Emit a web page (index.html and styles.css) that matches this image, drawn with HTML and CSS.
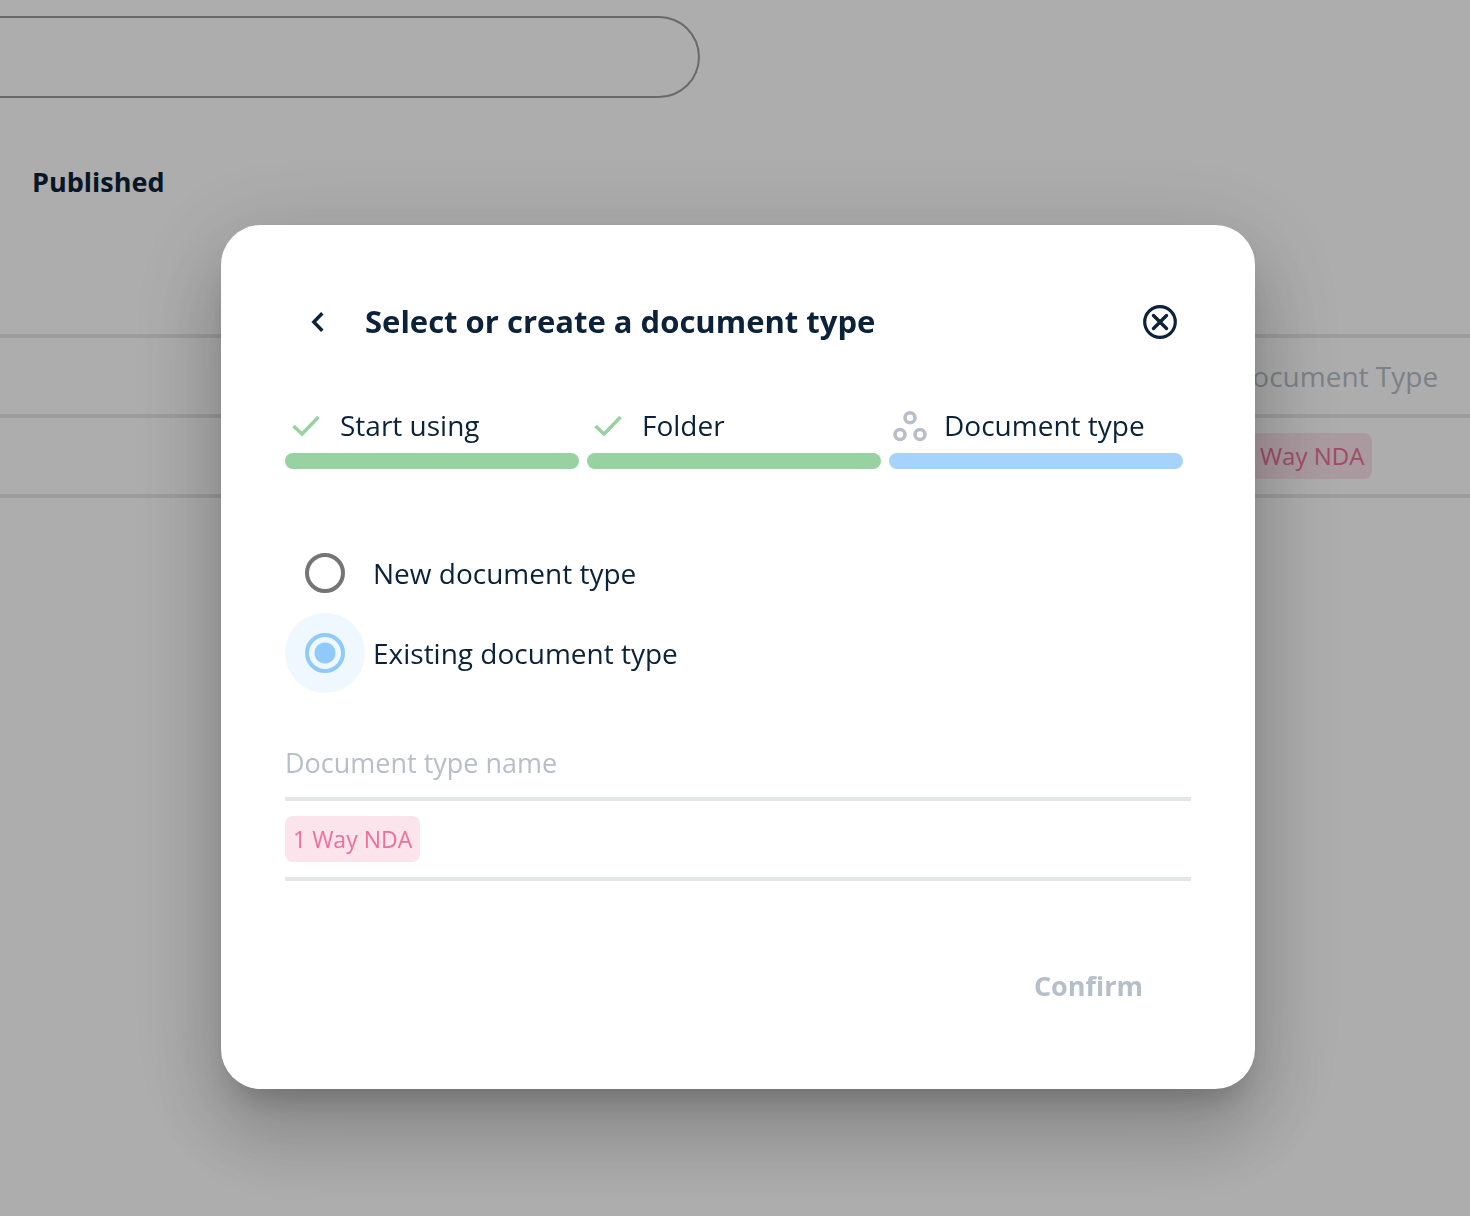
FILE: index.html
```html
<!DOCTYPE html>
<html lang="en">
<head>
  <meta charset="UTF-8" />
  <meta name="viewport" content="width=device-width, initial-scale=1" />
  <title>Select or create a document type</title>
  <link rel="stylesheet" href="styles.css">
</head>
<body>

  <main class="page">
    <input type="search" class="search" aria-label="Search documents" />
    <h2 class="page-heading">Published</h2>

    <table class="documents">
      <thead>
        <tr>
          <th></th>
          <th class="type-column">Document Type</th>
        </tr>
      </thead>
      <tbody>
        <tr>
          <td></td>
          <td class="type-column"><span class="tag">1 Way NDA</span></td>
        </tr>
      </tbody>
    </table>
  </main>

  <!-- Document type dialog -->
  <div class="overlay">
    <form class="modal" role="dialog" aria-modal="true" aria-labelledby="modalTitle">
      <header class="modal-header">
        <button type="button" class="icon-button" aria-label="Back">
          <svg width="18" height="24" viewBox="0 0 18 24" fill="none" stroke="currentColor" stroke-width="3.4">
            <path d="M14.3 4.2 L5.8 13 L14.3 21.8" />
          </svg>
        </button>
        <h1 id="modalTitle">Select or create a document type</h1>
        <button type="button" class="icon-button" aria-label="Close">
          <svg width="38" height="38" viewBox="0 0 38 38" fill="none" stroke="currentColor">
            <circle cx="20" cy="20" r="15.3" stroke-width="3.2" />
            <path d="M13.5 13.5 L26.5 26.5 M26.5 13.5 L13.5 26.5" stroke-width="3.4" stroke-linecap="round" />
          </svg>
        </button>
      </header>

      <ol class="steps">
        <li class="step done">
          <div class="step-label">
            <svg width="40" height="40" viewBox="0 0 40 40" fill="none" stroke="currentColor" stroke-width="3.4">
              <path d="M8.5 21 L17 29 L33.5 12" />
            </svg>
            Start using
          </div>
        </li>
        <li class="step done">
          <div class="step-label">
            <svg width="40" height="40" viewBox="0 0 40 40" fill="none" stroke="currentColor" stroke-width="3.4">
              <path d="M8.5 21 L17 29 L33.5 12" />
            </svg>
            Folder
          </div>
        </li>
        <li class="step current">
          <div class="step-label">
            <svg width="40" height="40" viewBox="0 0 40 40" fill="none" stroke="currentColor" stroke-width="3.6">
              <circle cx="21" cy="12.7" r="5" />
              <circle cx="11" cy="29.5" r="5" />
              <circle cx="31" cy="29.5" r="5" />
            </svg>
            Document type
          </div>
        </li>
      </ol>

      <div class="options">
        <label class="option">
          <span class="radio-wrap"><input type="radio" name="mode" value="new" /></span>
          New document type
        </label>
        <label class="option">
          <span class="radio-wrap"><input type="radio" name="mode" value="existing" checked /></span>
          Existing document type
        </label>
      </div>

      <input type="text" class="name-input" name="typeName" placeholder="Document type name" aria-label="Document type name" />
      <ul class="type-list">
        <li><span class="tag">1 Way NDA</span></li>
      </ul>

      <footer class="modal-footer">
        <button type="submit" class="confirm" disabled>Confirm</button>
      </footer>
    </form>
  </div>

</body>
</html>
```

FILE: styles.css
```css
* {
  box-sizing: border-box;
}
body {
  margin: 0;
  min-height: 100vh;
  font-family: "Open Sans", sans-serif;
  font-size: 28px;
  line-height: 40px;
  color: #0b2239;
  background: #fff;
}
ol, ul {
  list-style: none;
  margin: 0;
  padding: 0;
}
button {
  font-family: inherit;
  border: none;
  background: none;
  color: inherit;
  cursor: pointer;
}

/* Page behind the dialog */
.page {
  padding-top: 16px;
}
.search {
  display: block;
  width: 48%;
  max-width: 700px;
  height: 82px;
  padding: 0 40px;
  font: inherit;
  border: 2px solid #9c9c9c;
  border-left: none;
  border-radius: 0 41px 41px 0;
  background: #fff;
}
.page-heading {
  margin: 64px 32px 132px;
  font-size: 27px;
  font-weight: 700;
}
.documents {
  width: 100%;
  border-collapse: separate;
  border-spacing: 0;
  border-top: 4px solid #e4e6e9;
}
.documents th,
.documents td {
  height: 80px;
  padding: 0;
  border-bottom: 4px solid #e4e6e9;
  font-weight: 400;
  text-align: left;
}
.documents th {
  color: #b6bfc8;
}
.documents .type-column {
  width: 238px;
}
.tag {
  display: inline-block;
  padding: 0 8px;
  font-size: 24px;
  line-height: 46px;
  color: #ec709b;
  background: #fbe4ec;
  border-radius: 8px;
  vertical-align: middle;
}

/* Overlay */
.overlay {
  position: fixed;
  inset: 0;
  display: flex;
  justify-content: center;
  align-items: flex-start;
  padding: 225px 0 0 6px;
  background: rgba(0, 0, 0, 0.32);
}
.modal {
  width: 100%;
  max-width: 1034px;
  padding: 64px;
  background: #fff;
  border-radius: 40px;
  box-shadow: 0 22px 30px -14px rgba(0, 0, 0, 0.2),
    0 48px 76px 6px rgba(0, 0, 0, 0.14),
    0 18px 92px 16px rgba(0, 0, 0, 0.12);
}
.modal-header {
  display: flex;
  align-items: center;
  gap: 16px;
}
.modal-header h1 {
  flex: 1;
  margin: 0;
  font-size: 31px;
  font-weight: 700;
}
.icon-button {
  display: flex;
  align-items: center;
  justify-content: center;
  width: 64px;
  height: 64px;
  padding: 0;
}

/* Steps */
.steps {
  display: flex;
  margin-top: 52px;
}
.step {
  flex: 1;
  padding-right: 8px;
}
.step::after {
  content: "";
  display: block;
  height: 16px;
  margin-top: 8px;
  border-radius: 8px;
  background: #98d2a2;
}
.step.current::after {
  background: #a6d3fb;
}
.step-label {
  display: flex;
  align-items: center;
  gap: 15px;
}
.step-label svg {
  color: #98d2a2;
}
.current .step-label svg {
  color: #b6bfc8;
}

/* Radio options */
.options {
  margin-top: 64px;
}
.option {
  display: flex;
  align-items: center;
  gap: 8px;
  cursor: pointer;
}
.radio-wrap {
  display: flex;
  align-items: center;
  justify-content: center;
  width: 80px;
  height: 80px;
  border-radius: 50%;
}
.radio-wrap:has(input:checked) {
  background: #f0f8ff;
}
.radio-wrap input {
  appearance: none;
  width: 40px;
  height: 40px;
  margin: 0;
  border: 4px solid #757575;
  border-radius: 50%;
}
.radio-wrap input:checked {
  border-color: #90caf9;
  background: radial-gradient(circle, #90caf9 10px, transparent 11px);
}

.name-input {
  display: block;
  width: 100%;
  height: 76px;
  margin-top: 32px;
  padding: 2px 0 0;
  font: inherit;
  font-size: 27px;
  color: inherit;
  border: none;
  border-bottom: 4px solid #e4e6e9;
  outline: none;
}
.name-input::placeholder {
  color: #b6bfc8;
  opacity: 1;
}
.type-list li {
  display: flex;
  align-items: center;
  height: 80px;
  border-bottom: 4px solid #e4e6e9;
}
.type-list .tag {
  font-size: 23px;
}

.modal-footer {
  display: flex;
  justify-content: flex-end;
  margin-top: 64px;
}
.confirm {
  height: 80px;
  padding: 0 48px;
  font-size: 27px;
  font-weight: 700;
}
.confirm:disabled {
  color: #b6bfc8;
  cursor: default;
}
```
